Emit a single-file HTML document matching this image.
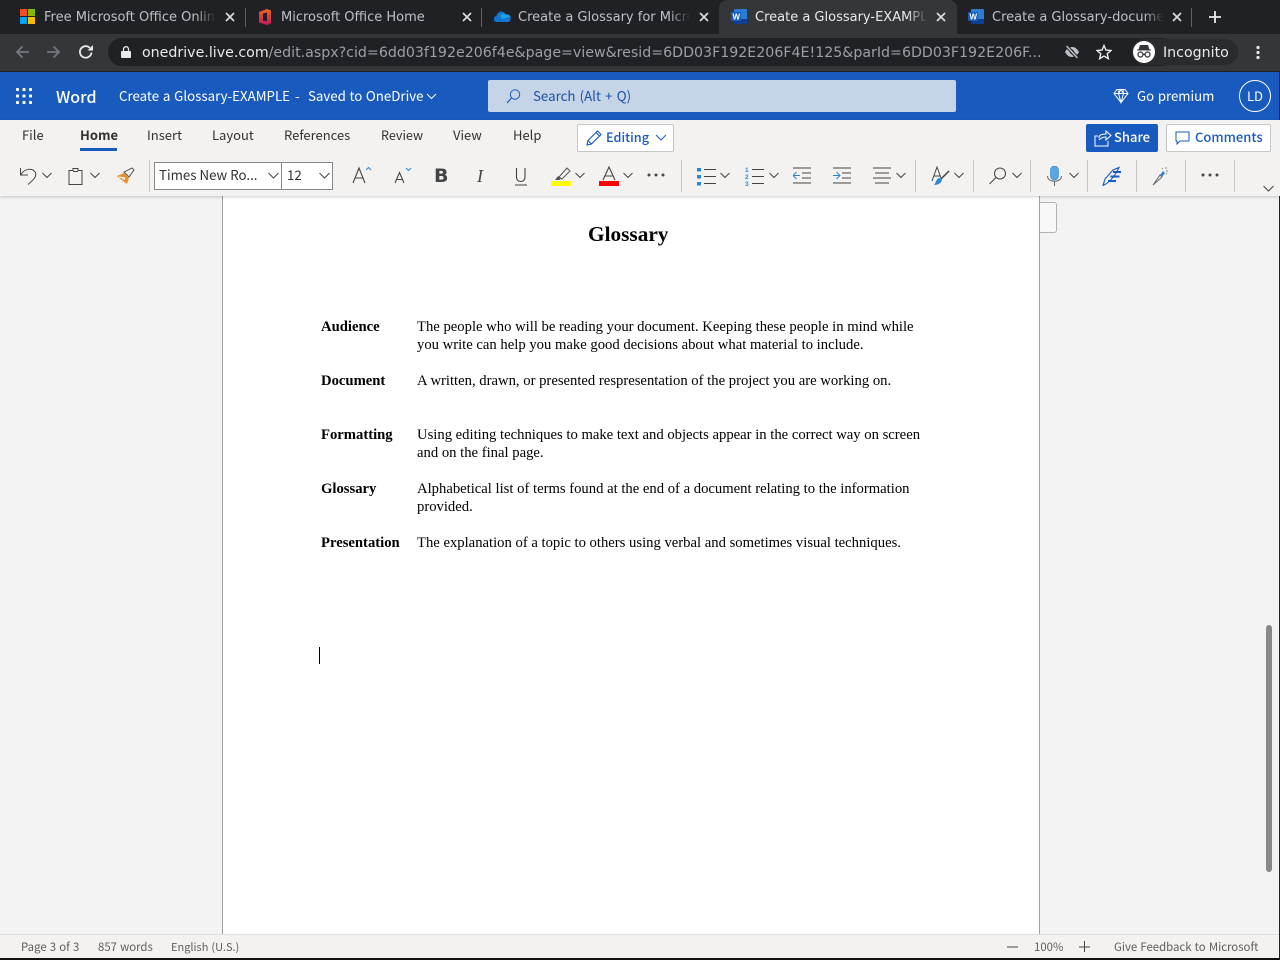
<!DOCTYPE html>
<html><head><meta charset="utf-8"><title>Create a Glossary-EXAMPLE</title>
<style>
html,body{margin:0;padding:0;width:1280px;height:960px;overflow:hidden;background:#f3f3f3}
#r{position:relative;width:1280px;height:960px;overflow:hidden}
#r div,#r span.a,#r svg{position:absolute}
.t{white-space:nowrap;line-height:1}
.tab{font:13px "DejaVu Sans",sans-serif;color:#bdc1c6;top:9px;height:17px;line-height:17px;white-space:nowrap;overflow:hidden}
.ui{font-family:"Noto Sans CJK JP","Liberation Sans",sans-serif;white-space:nowrap;line-height:20px}
.doc{font:14.67px "Liberation Serif",serif;color:#000;white-space:nowrap;line-height:18px}
.b{font-weight:bold}
.sep{width:1px;background:#c8c6c4;top:160px;height:32px}
.x{stroke:#dadce0;stroke-width:1.7;fill:none}
.c{stroke:#444;stroke-width:1;fill:none}
.rt{font-size:13px;color:#323130;top:125px}
.st{font-size:11.400px;color:#605e5c;top:937px;word-spacing:.6px}
</style></head><body><div id="r">
<!-- tab strip -->
<div style="left:0;top:0;width:1280px;height:34px;background:#202124"></div>
<div style="left:719px;top:0;width:238px;height:34px;background:#35363a;border-radius:8px 8px 0 0"></div>
<div style="left:0;top:34px;width:1280px;height:37px;background:#35363a"></div>
<div style="left:0;top:71px;width:1280px;height:1px;background:#202124"></div>
<div style="left:245px;top:8px;width:1px;height:19px;background:#5f6368"></div>
<div style="left:481px;top:8px;width:1px;height:19px;background:#5f6368"></div>
<div style="left:1191px;top:8px;width:1px;height:19px;background:#5f6368"></div>
<!-- favicons -->
<svg style="left:20px;top:9px" width="15" height="15"><rect width="7" height="7" fill="#f25022"/><rect x="8" width="7" height="7" fill="#7fba00"/><rect y="8" width="7" height="7" fill="#00a4ef"/><rect x="8" y="8" width="7" height="7" fill="#ffb900"/></svg>
<svg style="left:259px;top:9px" width="12" height="16"><defs><linearGradient id="o" x1="0" y1="0" x2="0" y2="1"><stop offset="0" stop-color="#f0641e"/><stop offset="1" stop-color="#c2185b"/></linearGradient></defs><path d="M0 3L8 0l4 1.500v13L8 16l-8-2.500z" fill="url(#o)"/><path d="M4 4.500l4-1v9l-4-1z" fill="#202124"/></svg>
<svg style="left:494px;top:10px" width="17" height="13"><path d="M3 12a3 3 0 0 1-.5-6A5 5 0 0 1 12 4.500 3.500 3.500 0 0 1 16.500 9 3 3 0 0 1 14 12z" fill="#0f78d4"/><path d="M6 5.500a5 5 0 0 1 6-1A3.500 3.500 0 0 1 16 7L8 9z" fill="#28a8ea" opacity=".8"/></svg>
<svg style="left:731px;top:9px" width="16" height="15"><rect x="3" width="13" height="15" rx="1" fill="#2b7cd3"/><rect x="3" y="10" width="13" height="5" fill="#103f91"/><rect y="3" width="10" height="9" rx="1" fill="#185abd"/><text x="1.500" y="10.500" font-family="Liberation Sans" font-weight="bold" font-size="8" fill="#fff">W</text></svg>
<svg style="left:968px;top:9px" width="16" height="15"><rect x="3" width="13" height="15" rx="1" fill="#2b7cd3"/><rect x="3" y="10" width="13" height="5" fill="#103f91"/><rect y="3" width="10" height="9" rx="1" fill="#185abd"/><text x="1.500" y="10.500" font-family="Liberation Sans" font-weight="bold" font-size="8" fill="#fff">W</text></svg>
<!-- tabs -->
<div class="tab" style="left:44px;width:172px">Free Microsoft Office Online</div>
<div class="tab" style="left:281px;width:172px">Microsoft Office Home</div>
<div class="tab" style="left:518px;width:172px">Create a Glossary for Microsoft</div>
<div class="tab" style="left:755px;width:172px;color:#e8eaed">Create a Glossary-EXAMPLE</div>
<div class="tab" style="left:992px;width:172px">Create a Glossary-document</div>
<div style="left:196px;top:8px;width:20px;height:18px;background:linear-gradient(90deg,rgba(32,33,36,0),#202124)"></div>
<div style="left:670px;top:8px;width:20px;height:18px;background:linear-gradient(90deg,rgba(32,33,36,0),#202124)"></div>
<div style="left:907px;top:8px;width:20px;height:18px;background:linear-gradient(90deg,rgba(53,54,58,0),#35363a)"></div>
<div style="left:1144px;top:8px;width:20px;height:18px;background:linear-gradient(90deg,rgba(32,33,36,0),#202124)"></div>
<svg style="left:225px;top:12px" width="10" height="10"><path class="x" d="M1 1l8 8M9 1l-8 8"/></svg>
<svg style="left:462px;top:12px" width="10" height="10"><path class="x" d="M1 1l8 8M9 1l-8 8"/></svg>
<svg style="left:699px;top:12px" width="10" height="10"><path class="x" d="M1 1l8 8M9 1l-8 8"/></svg>
<svg style="left:936px;top:12px" width="10" height="10"><path class="x" d="M1 1l8 8M9 1l-8 8"/></svg>
<svg style="left:1172px;top:12px" width="10" height="10"><path class="x" d="M1 1l8 8M9 1l-8 8"/></svg>
<svg style="left:1209px;top:11px" width="12" height="12"><path d="M6 0v12M0 6h12" stroke="#e8eaed" stroke-width="1.800"/></svg>
<!-- toolbar -->
<svg style="left:14px;top:44px" width="16" height="16"><path d="M15 8H3M8.500 2.500L3 8l5.500 5.500" stroke="#74787c" stroke-width="1.800" fill="none"/></svg>
<svg style="left:46px;top:44px" width="16" height="16"><path d="M1 8h12M7.500 2.500L13 8l-5.500 5.500" stroke="#74787c" stroke-width="1.800" fill="none"/></svg>
<svg style="left:78px;top:44px" width="16" height="16"><path d="M13.500 8.500A5.800 5.800 0 1 1 11.800 3.800" stroke="#e8eaed" stroke-width="1.800" fill="none"/><path d="M9.500 6.500H15V1z" fill="#e8eaed"/></svg>
<div style="left:108px;top:38px;width:1068px;height:28px;border-radius:14px;background:#202124"></div>
<svg style="left:121px;top:46px" width="10" height="12"><rect y="5" width="10" height="7" rx="1" fill="#e8eaed"/><path d="M2.500 5V3.200a2.500 2.500 0 0 1 5 0V5" stroke="#e8eaed" stroke-width="1.300" fill="none"/></svg>
<div class="t" style="left:142px;top:45px;font:14.200px/17px 'DejaVu Sans',sans-serif;color:#e8eaed">onedrive.live.com<span style="color:#9aa0a6">/edit.aspx?cid=6dd03f192e206f4e&amp;page=view&amp;resid=6DD03F192E206F4E!125&amp;parId=6DD03F192E206F...</span></div>
<svg style="left:1064px;top:45px" width="16" height="14"><path d="M1 7c2-3.500 4.200-5 7-5s5 1.500 7 5c-2 3.500-4.200 5-7 5S3 10.500 1 7z" fill="#bdc1c6"/><circle cx="8" cy="7" r="2.200" fill="#202124"/><path d="M2.500 1l11 12" stroke="#202124" stroke-width="3.500"/><path d="M2.500 1l11 12" stroke="#bdc1c6" stroke-width="1.500"/></svg>
<svg style="left:1096px;top:44px" width="16" height="16"><path d="M8 1.500l2 4.600 5 .4-3.800 3.300 1.200 4.900L8 12.100l-4.400 2.600 1.200-4.900L1 6.500l5-.4z" stroke="#e8eaed" stroke-width="1.400" fill="none"/></svg>
<div style="left:1132px;top:39px;width:106px;height:26px;border-radius:13px;background:#2a2b2e"></div>
<div style="left:1133px;top:41px;width:22px;height:22px;border-radius:11px;background:#fff"></div>
<svg style="left:1135px;top:44px" width="18" height="16"><path d="M5 1h8l1.500 4.500H3.500z M2 5.500h14v1H2z" fill="#35363a"/><circle cx="5.500" cy="10.500" r="2.500" stroke="#35363a" stroke-width="1.300" fill="none"/><circle cx="12.500" cy="10.500" r="2.500" stroke="#35363a" stroke-width="1.300" fill="none"/><path d="M8 10.500h2" stroke="#35363a" stroke-width="1.300"/></svg>
<div class="t" style="left:1163px;top:45px;font:14.200px/17px 'DejaVu Sans',sans-serif;color:#e8eaed">Incognito</div>
<svg style="left:1255px;top:45px" width="6" height="16"><circle cx="3" cy="2.500" r="1.600" fill="#e8eaed"/><circle cx="3" cy="7.500" r="1.600" fill="#e8eaed"/><circle cx="3" cy="12.500" r="1.600" fill="#e8eaed"/></svg>
<!-- word title bar -->
<div style="left:0;top:72px;width:1280px;height:48px;background:#185abd"></div>
<svg style="left:16px;top:88px" width="16" height="16" fill="#fff"><rect width="3" height="3" rx=".8"/><rect x="6.500" width="3" height="3" rx=".8"/><rect x="13" width="3" height="3" rx=".8"/><rect y="6.500" width="3" height="3" rx=".8"/><rect x="6.500" y="6.500" width="3" height="3" rx=".8"/><rect x="13" y="6.500" width="3" height="3" rx=".8"/><rect y="13" width="3" height="3" rx=".8"/><rect x="6.500" y="13" width="3" height="3" rx=".8"/><rect x="13" y="13" width="3" height="3" rx=".8"/></svg>
<div class="ui" style="left:56px;top:86px;font-size:16px;font-weight:500;color:#fff">Word</div>
<div class="ui" style="left:119px;top:86px;font-size:13.300px;word-spacing:.8px;color:#fff">Create a Glossary-EXAMPLE</div>
<div class="ui" style="left:295px;top:86px;font-size:13.300px;color:#fff">-</div>
<div class="ui" style="left:308px;top:86px;font-size:13.300px;word-spacing:.6px;color:#fff">Saved to OneDrive</div>
<svg style="left:426px;top:93px" width="11" height="7"><path d="M1 1l4.500 4.500L10 1" stroke="#fff" fill="none"/></svg>
<div style="left:488px;top:80px;width:468px;height:32px;border-radius:2px;background:#c6d4e8"></div>
<svg style="left:505px;top:88px" width="17" height="17"><circle cx="10" cy="6.500" r="4.700" stroke="#185abd" fill="none"/><path d="M6.500 10L2 15" stroke="#185abd" stroke-width="1.200"/></svg>
<div class="ui" style="left:533px;top:86px;font-size:13.300px;word-spacing:1.200px;color:#1b4f9f">Search (Alt + Q)</div>
<svg style="left:1113px;top:88px" width="16" height="16"><path d="M4 1.500h8l3 4-7 9-7-9zM1 5.500h14M5.500 5.500L8 14.500l2.500-9M6 1.500l-.5 4L8 1.500l2.500 4-.5-4" stroke="#fff" fill="none"/></svg>
<div class="ui" style="left:1137px;top:86px;font-size:13.200px;word-spacing:.8px;color:#fff">Go premium</div>
<div style="left:1239px;top:80px;width:30px;height:30px;border:1px solid #fff;border-radius:50%"></div>
<div class="ui" style="left:1247px;top:86px;font-size:13px;color:#fff">LD</div>
<!-- ribbon -->
<div style="left:0;top:120px;width:1280px;height:76px;background:#f3f2f1;box-shadow:0 1px 3px rgba(0,0,0,.2);z-index:2"></div>
<div id="rb" style="left:0;top:0;width:1280px;height:200px;z-index:3">
<div class="ui rt" style="left:22px">File</div>
<div class="ui rt" style="left:80px;font-weight:700">Home</div>
<div style="left:80px;top:148px;width:37px;height:3px;background:#185abd"></div>
<div class="ui rt" style="left:147px">Insert</div>
<div class="ui rt" style="left:212px">Layout</div>
<div class="ui rt" style="left:284px">References</div>
<div class="ui rt" style="left:381px;font-size:12.600px">Review</div>
<div class="ui rt" style="left:453px">View</div>
<div class="ui rt" style="left:513px">Help</div>
<div style="left:577px;top:124px;width:95px;height:26px;background:#fff;border:1px solid #c8c6c4;border-radius:2px"></div>
<svg style="left:585px;top:129px" width="18" height="18"><path d="M2 16l1-4.500L12.500 2 16 5.500 6.500 15zM3 11.500L6.500 15M11 3.500L14.500 7" stroke="#185abd" stroke-width="1.100" fill="none"/></svg>
<div class="ui" style="left:606px;top:127px;font-size:12.700px;font-weight:500;color:#185abd">Editing</div>
<svg style="left:655px;top:134px" width="12" height="8"><path d="M1 1l5 5 5-5" stroke="#185abd" fill="none"/></svg>
<div style="left:1086px;top:124px;width:72px;height:28px;background:#185abd;border-radius:2px"></div>
<svg style="left:1094px;top:130px" width="18" height="18"><path d="M5 8v-.5C5 5.500 7 4 12 4V1l5 4.500L12 10V7c-3 0-5 .5-7 3M14 11v5H1V6h3" stroke="#fff" fill="none"/></svg>
<div class="ui" style="left:1114px;top:127px;font-size:13px;font-weight:500;color:#fff">Share</div>
<div style="left:1166px;top:124px;width:103px;height:26px;background:#fff;border:1px solid #c8c6c4;border-radius:2px"></div>
<svg style="left:1175px;top:131px" width="16" height="16"><path d="M1 1h13v9H5l-3 3v-3H1z" stroke="#185abd" fill="none"/></svg>
<div class="ui" style="left:1195px;top:127px;font-size:13px;font-weight:500;color:#185abd">Comments</div>
<!-- row 2 -->
<svg style="left:19px;top:166px" width="19" height="20"><path d="M1.500 2V9H9M1.500 9C5 3 13 1 16.500 6.500C18 11 14 14 9 18.500" stroke="#444" stroke-width="1" fill="none"/></svg>
<svg style="left:42px;top:172px" width="10" height="7"><path class="c" d="M.5 1L5 5.500 9.500 1"/></svg>
<svg style="left:68px;top:167px" width="16" height="19"><path d="M1 3.500h4V1.500h5v2h4v14H1z" class="c"/><path d="M5 4.500h5" class="c"/></svg>
<svg style="left:90px;top:172px" width="10" height="7"><path class="c" d="M.5 1L5 5.500 9.500 1"/></svg>
<svg style="left:116px;top:167px" width="19" height="18"><path d="M1 9l7-3 5 5-2 6c-3-2-7-5-10-8z" fill="#e8912d"/><path d="M8 5l5 5 5-7-2-2z" fill="#f3f2f1" stroke="#555"/><path d="M3 10l6 1M6 12l3 0" stroke="#fff"/></svg>
<div class="sep" style="left:149px"></div>
<div style="left:154px;top:162px;width:127px;height:26px;background:#fff;border:1px solid #8a8886"></div>
<div style="left:281px;top:162px;width:50px;height:26px;background:#fff;border:1px solid #8a8886"></div>
<div class="ui" style="left:159px;top:165px;font-size:13.300px;color:#323130">Times New Ro...</div>
<div class="ui" style="left:287px;top:165px;font-size:13.300px;color:#323130">12</div>
<svg style="left:268px;top:172px" width="11" height="7"><path class="c" d="M.5 1L5.500 6l5-5"/></svg>
<svg style="left:319px;top:172px" width="11" height="7"><path class="c" d="M.5 1L5.500 6l5-5"/></svg>
<svg style="left:352px;top:166px" width="20" height="18"><path d="M1 17L7 2l6 15M3 12h8" stroke="#444" stroke-width="1.100" fill="none"/><path d="M14 4l2.500-2.500L19 4" stroke="#2b88d8" fill="none"/></svg>
<svg style="left:394px;top:166px" width="18" height="18"><path d="M1 17L5.500 6.500 10 17M2.500 13.500h6" stroke="#444" stroke-width="1.100" fill="none"/><path d="M12 2l2.500 2.500L17 2" stroke="#2b88d8" fill="none"/></svg>
<div class="t" style="left:434px;top:166px;font:bold 19px/20px 'DejaVu Sans',sans-serif;color:#444">B</div>
<div class="t" style="left:477px;top:166px;font:italic 18px/20px 'Liberation Serif',serif;color:#444">I</div>
<svg style="left:514px;top:167px" width="14" height="19"><path d="M2.500 1v9c0 6 8.500 6 8.500 0V1" stroke="#444" fill="none" stroke-width="1.100"/><path d="M1 18h12" stroke="#444"/></svg>
<svg style="left:552px;top:166px" width="20" height="16"><path d="M7 11L15 2l3 3-8 8z" stroke="#555" fill="none"/><path d="M3 14l3-4 3 3-2 1z" fill="#555"/></svg>
<div style="left:551px;top:181px;width:20px;height:5px;background:#ffff00"></div>
<svg style="left:575px;top:172px" width="10" height="7"><path class="c" d="M.5 1L5 5.500 9.500 1"/></svg>
<svg style="left:601px;top:166px" width="16" height="15"><path d="M2 14L8 1l6 13M4 10h8" stroke="#444" stroke-width="1.100" fill="none"/></svg>
<div style="left:599px;top:181px;width:20px;height:5px;background:#ff0000"></div>
<svg style="left:623px;top:172px" width="10" height="7"><path class="c" d="M.5 1L5 5.500 9.500 1"/></svg>
<svg style="left:647px;top:173px" width="18" height="4" fill="#444"><circle cx="2" cy="2" r="1.500"/><circle cx="9" cy="2" r="1.500"/><circle cx="16" cy="2" r="1.500"/></svg>
<div class="sep" style="left:681px"></div>
<svg style="left:697px;top:166px" width="20" height="20"><rect y="2" width="4" height="3.500" fill="#2b88d8"/><rect y="9" width="4" height="3.500" fill="#2b88d8"/><rect y="16" width="4" height="3.500" fill="#2b88d8"/><path d="M7 3.500h12M7 10.500h12M7 17.500h12" stroke="#444"/></svg>
<svg style="left:720px;top:172px" width="10" height="7"><path class="c" d="M.5 1L5 5.500 9.500 1"/></svg>
<svg style="left:745px;top:166px" width="20" height="20"><path d="M7 3.500h12M7 10.500h12M7 17.500h12" stroke="#444"/><text x="0" y="6" font-size="6.500" font-weight="bold" fill="#2b88d8" font-family="Liberation Sans">1</text><text x="0" y="13" font-size="6.500" font-weight="bold" fill="#2b88d8" font-family="Liberation Sans">2</text><text x="0" y="20" font-size="6.500" font-weight="bold" fill="#2b88d8" font-family="Liberation Sans">3</text></svg>
<svg style="left:769px;top:172px" width="10" height="7"><path class="c" d="M.5 1L5 5.500 9.500 1"/></svg>
<svg style="left:793px;top:167px" width="19" height="18"><path d="M0 1h18M9 6h9M9 11h9M0 16h18" stroke="#444"/><path d="M7 8.500H0M3.500 5L0 8.500 3.500 12" stroke="#2b88d8" fill="none"/></svg>
<svg style="left:833px;top:167px" width="19" height="18"><path d="M0 1h18M9 6h9M9 11h9M0 16h18" stroke="#444"/><path d="M0 8.500h7M3.500 5L7 8.500 3.500 12" stroke="#2b88d8" fill="none"/></svg>
<svg style="left:873px;top:167px" width="19" height="18"><path d="M0 1h18M2 6h14M0 11h18M2 16h14" stroke="#444"/></svg>
<svg style="left:896px;top:172px" width="10" height="7"><path class="c" d="M.5 1L5 5.500 9.500 1"/></svg>
<div class="sep" style="left:915px"></div>
<svg style="left:931px;top:166px" width="20" height="20"><path d="M1 15L6 1l4 11" stroke="#444" fill="none"/><path d="M3 10h6" stroke="#444"/><path d="M10 13L18 5" stroke="#444" stroke-width="1.500"/><path d="M3 19c4 0 8-2 8-6l-3-1c-3 1-3 5-5 7z" fill="#2b88d8"/></svg>
<svg style="left:954px;top:172px" width="10" height="7"><path class="c" d="M.5 1L5 5.500 9.500 1"/></svg>
<div class="sep" style="left:973px"></div>
<svg style="left:989px;top:167px" width="18" height="18"><circle cx="11" cy="6.500" r="5.500" stroke="#444" fill="none"/><path d="M7 10.500L.5 17" stroke="#444"/></svg>
<svg style="left:1012px;top:172px" width="10" height="7"><path class="c" d="M.5 1L5 5.500 9.500 1"/></svg>
<div class="sep" style="left:1030px"></div>
<svg style="left:1047px;top:166px" width="15" height="21"><rect x="3.500" y="0" width="8" height="14" rx="4" fill="#5ba5e0" stroke="#2b88d8" stroke-width=".6"/><path d="M.5 10c0 7 14 7 14 0M7.500 15v5" stroke="#666" fill="none"/></svg>
<svg style="left:1069px;top:172px" width="10" height="7"><path class="c" d="M.5 1L5 5.500 9.500 1"/></svg>
<div class="sep" style="left:1087px"></div>
<svg style="left:1102px;top:166px" width="20" height="20"><path d="M1 19.500L3 13 11 4l6-2.500c-1 2-2 4-3 5.500-3 5-7 10-13 12.500z" stroke="#185abd" stroke-width="1.100" fill="none"/><path d="M11 6h8M8.500 10.500h9M6 15h8" stroke="#185abd" stroke-width="2"/></svg>
<div class="sep" style="left:1136px"></div>
<svg style="left:1152px;top:166px" width="17" height="20"><path d="M1 19L8 9l2 2z" stroke="#666" fill="#f3f2f1"/><path d="M8 9l3-4 2 2-3 4z" fill="#2b88d8"/><path d="M14 1v2M16 5h-2M15 8l-1-1M10 2l1 1" stroke="#888"/></svg>
<div class="sep" style="left:1185px"></div>
<svg style="left:1201px;top:173px" width="18" height="4" fill="#444"><circle cx="2" cy="2" r="1.500"/><circle cx="9" cy="2" r="1.500"/><circle cx="16" cy="2" r="1.500"/></svg>
<div class="sep" style="left:1234px"></div>
<svg style="left:1263px;top:185px" width="11" height="7"><path class="c" d="M.5 1L5.500 6l5-5"/></svg>
</div>
<!-- canvas -->
<div style="left:222px;top:196px;width:816px;height:738px;background:#fff;border-left:1px solid #a19f9d;border-right:1px solid #a19f9d"></div>
<div style="left:1040px;top:202px;width:16px;height:29px;background:#f8f8f8;border:1px solid #b3b0ad;border-left:0;border-radius:0 3px 3px 0"></div>
<div class="doc b" style="left:588px;top:222px;font-size:21.3px;line-height:24px">Glossary</div>
<div class="doc b" style="left:321px;top:318px">Audience</div>
<div class="doc" style="left:417px;top:318px">The people who will be reading your document. Keeping these people in mind while</div>
<div class="doc" style="left:417px;top:336px">you write can help you make good decisions about what material to include.</div>
<div class="doc b" style="left:321px;top:372px">Document</div>
<div class="doc" style="left:417px;top:372px">A written, drawn, or presented respresentation of the project you are working on.</div>
<div class="doc b" style="left:321px;top:426px">Formatting</div>
<div class="doc" style="left:417px;top:426px">Using editing techniques to make text and objects appear in the correct way on screen</div>
<div class="doc" style="left:417px;top:444px">and on the final page.</div>
<div class="doc b" style="left:321px;top:480px">Glossary</div>
<div class="doc" style="left:417px;top:480px">Alphabetical list of terms found at the end of a document relating to the information</div>
<div class="doc" style="left:417px;top:498px">provided.</div>
<div class="doc b" style="left:321px;top:534px">Presentation</div>
<div class="doc" style="left:417px;top:534px">The explanation of a topic to others using verbal and sometimes visual techniques.</div>
<div style="left:319px;top:647px;width:1px;height:17px;background:#000"></div>
<!-- scrollbar -->
<div style="left:1266px;top:625px;width:6px;height:247px;border-radius:3px;background:#8a8886"></div>
<!-- status -->
<div style="left:0;top:934px;width:1280px;height:25px;background:#f3f2f1;border-top:1px solid #e1dfdd;box-sizing:border-box"></div>
<div style="left:0;top:958px;width:1280px;height:2px;background:#111"></div>
<div style="left:1279px;top:72px;width:1px;height:888px;background:#222"></div>
<div class="ui st" style="left:21px">Page 3 of 3</div>
<div class="ui st" style="left:98px">857 words</div>
<div class="ui st" style="left:171px;font-size:11px">English (U.S.)</div>
<svg style="left:1007px;top:946px" width="12" height="2"><path d="M0 1h11" stroke="#444"/></svg>
<div class="ui st" style="left:1034px">100%</div>
<svg style="left:1079px;top:941px" width="12" height="12"><path d="M0 6h11M5.500 0v11" stroke="#444"/></svg>
<div class="ui st" style="left:1114px">Give Feedback to Microsoft</div>
</div></body></html>
